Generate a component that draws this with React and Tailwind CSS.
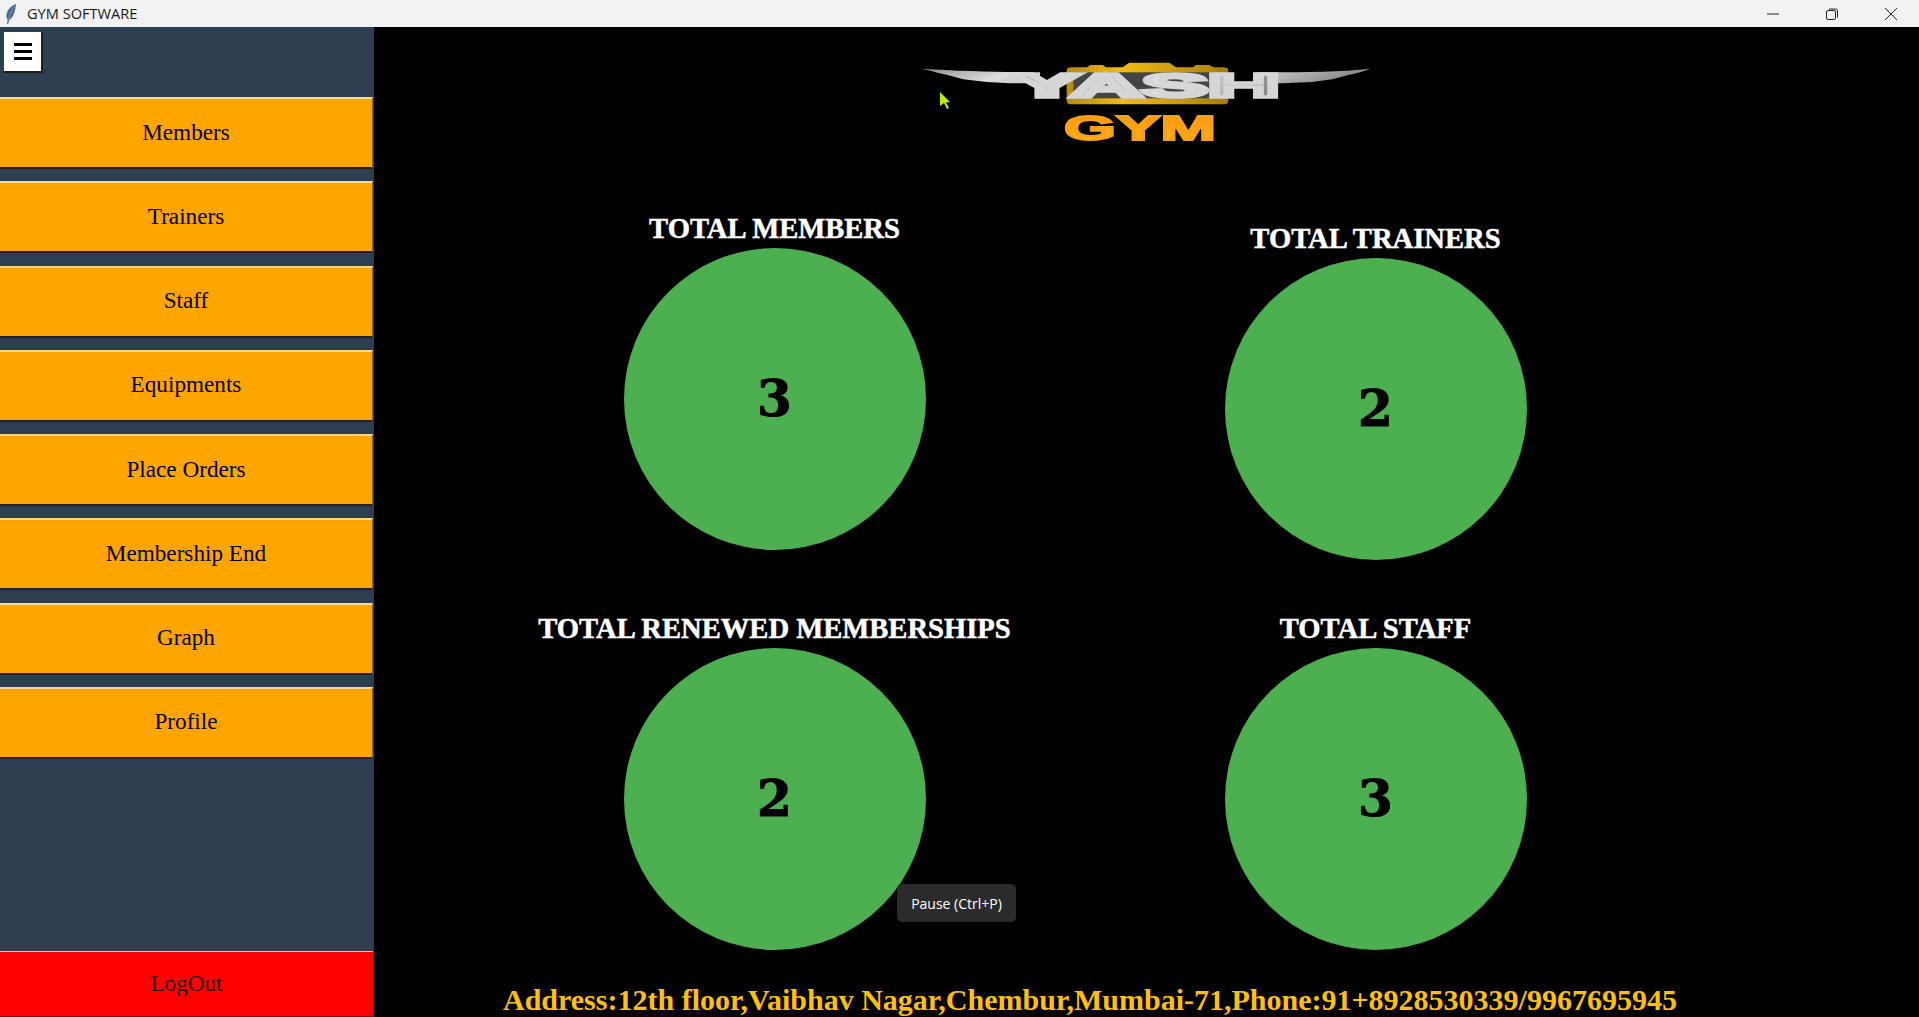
const menuItems = ["Members", "Trainers", "Staff", "Equipments", "Place Orders", "Membership End", "Graph", "Profile"]

const Feather = () => (
    <svg width="14" height="22" viewBox="0 0 14 22">
        <path d="M12 1C7 3 3 7 2.500 12c-.2 2 .2 3.500 1.200 4.500L3 21h1.200l1-4C9 15 11.500 8 12 1z" fill="#4a6a96" />
        <path d="M11 3C8 7 6 11 4.500 17" stroke="#9db4d2" strokeWidth="0.6" fill="none" />
    </svg>
)

const TitleBar = () => (
    <div className="flex h-[27px] items-center bg-[#f3f2f3]">
        <div className="ml-[4px] flex items-center">
            <Feather />
        </div>
        <span className="ml-[9px] font-['Open_Sans',sans-serif] text-[14.6px] text-[#1a1a1a]">GYM SOFTWARE</span>
        <div className="ml-auto flex items-center gap-[47px] pr-[22px]">
            <svg width="12" height="12" viewBox="0 0 12 12">
                <path d="M0 6h12" stroke="#222" strokeWidth="1" />
            </svg>
            <svg width="12" height="12" viewBox="0 0 12 12" fill="none" stroke="#222" strokeWidth="1">
                <rect x="0.500" y="2.500" width="9" height="9" rx="1.500" />
                <path d="M3 1h6.500A2 2 0 0 1 11.500 3v6.500" />
            </svg>
            <svg width="12" height="12" viewBox="0 0 12 12" stroke="#222" strokeWidth="1">
                <path d="M0 0l12 12M12 0L0 12" />
            </svg>
        </div>
    </div>
)

const Sidebar = () => (
    <div className="flex w-[374px] shrink-0 flex-col bg-[#2c3e50]">
        <button className="ml-[4px] mt-[5px] flex h-[41px] w-[39px] items-center justify-center border-r-2 border-b-2 border-[#1c1c1c] bg-white">
            <svg width="18" height="17" viewBox="0 0 18 17">
                <path d="M0 0h18v3H0zM0 7h18v3H0zM0 14h18v3H0z" fill="#000" />
            </svg>
        </button>
        <div className="mt-[24px] flex flex-col gap-[12.25px]">
            {menuItems.map((item) => (
                <button
                    key={item}
                    className="flex h-[72px] w-[373px] items-center justify-center border-t-2 border-r border-b-2 border-t-[#ffd88a] border-r-[#8a6000] border-b-[#22201c] bg-[#ffa500] pb-[2px] font-['Liberation_Serif',serif] text-[23.2px] text-black"
                >
                    {item}
                </button>
            ))}
        </div>
        <button className="mt-auto flex h-[66px] w-[373px] items-center justify-center border-t border-b border-t-[#ffb0b0] border-b-[#900000] bg-[#ff0000] pb-[2px] font-['Liberation_Serif',serif] text-[23.2px] text-[#1c0000]">
            LogOut
        </button>
    </div>
)

// logo viewBox is 3x its on-screen size
const Logo = () => (
    <svg width="500" height="120" viewBox="0 0 1500 360">
        <defs>
            <linearGradient id="silver" x1="0" y1="0" x2="1" y2="0.1">
                <stop offset="0" stopColor="#8c8c8c" />
                <stop offset="0.22" stopColor="#dcdcdc" />
                <stop offset="0.42" stopColor="#bdbdbd" />
                <stop offset="0.6" stopColor="#ececec" />
                <stop offset="0.8" stopColor="#c4c4c4" />
                <stop offset="1" stopColor="#8a8a8a" />
            </linearGradient>
            <linearGradient id="gold" x1="0" y1="0" x2="1" y2="0">
                <stop offset="0" stopColor="#b88a10" />
                <stop offset="0.35" stopColor="#f0bc14" />
                <stop offset="0.7" stopColor="#c8980f" />
                <stop offset="1" stopColor="#a87c0c" />
            </linearGradient>
            <linearGradient id="orange" x1="0" y1="0" x2="0" y2="1">
                <stop offset="0" stopColor="#f78f10" />
                <stop offset="1" stopColor="#ffb81c" />
            </linearGradient>
        </defs>
        <path d="M530 82h30l12-7h36l10 7h50l20-14h120l20 14h50l10-7h40l12 7h30q15 0 15 10v90q0 11-15 11H515q-15 0-15-11V92q0-10 15-10z" fill="url(#gold)" />
        <rect x="520" y="97" width="425" height="78" fill="#444444" />
        <path d="M65 86c120 8 260 10 355 11v33H330l-70-4-70-8-50-14-25-5-20-6zM1412 86c-100 11-220 11-345 11v33h80l90-4 60-8 45-12 30-7 20-6z" fill="url(#silver)" />
        <text x="342" y="170" textLength="796" lengthAdjust="spacingAndGlyphs" fontFamily="'Liberation Sans',sans-serif" fontWeight="700" fontSize="100" fill="url(#silver)" stroke="#d6d6d6" strokeWidth="11">YASH</text>
        <text x="492" y="299" textLength="456" lengthAdjust="spacingAndGlyphs" fontFamily="'Liberation Sans',sans-serif" fontWeight="700" fontSize="104" fill="url(#orange)" stroke="#f9a015" strokeWidth="6">GYM</text>
    </svg>
)

const StatCard = ({ label, value, className }) => (
    <div className={`flex flex-col items-center ${className}`}>
        <h3 className="pt-[2px] font-['Liberation_Serif',serif] text-[28.6px] leading-[34px] font-bold text-white [-webkit-text-stroke:0.5px_white]">{label}</h3>
        <div className="mt-[2px] flex h-[302px] w-[302px] items-center justify-center rounded-full bg-[#4caf50]">
            <span className="font-['DejaVu_Serif',serif] text-[50px] leading-none font-bold text-black [-webkit-text-stroke:1px_black]">{value}</span>
        </div>
    </div>
)

const App = () => {
    return (
        <div className="flex h-[1017px] w-full flex-col overflow-hidden bg-black">
            <TitleBar />
            <div className="flex min-h-0 flex-1">
                <Sidebar />
                <div className="relative flex flex-1 flex-col items-center">
                    <div className="ml-[7px] mt-[13px]">
                        <Logo />
                    </div>
                    <div className="ml-[100px] mt-[50px] grid w-[1202px] grid-cols-2 justify-items-center self-start">
                        <StatCard label="TOTAL MEMBERS" value="3" />
                        <StatCard label="TOTAL TRAINERS" value="2" className="mt-[10px]" />
                        <StatCard label="TOTAL RENEWED MEMBERSHIPS" value="2" className="mt-[50px]" />
                        <StatCard label="TOTAL STAFF" value="3" className="mt-[50px]" />
                    </div>
                    <p className="ml-[129px] mt-[33px] self-start font-['Liberation_Serif',serif] text-[30px] leading-[34px] font-bold whitespace-nowrap text-[#ffc107]">
                        Address:12th floor,Vaibhav Nagar,Chembur,Mumbai-71,Phone:91+8928530339/9967695945
                    </p>
                    {/* player tooltip and cursor lying over the recording */}
                    <div className="absolute top-[857px] left-[523px] flex h-[38px] w-[119px] items-center justify-center rounded-[5px] bg-[#2b2b2b] font-['Open_Sans',sans-serif] text-[14px] text-white">
                        Pause (Ctrl+P)
                    </div>
                    <svg className="absolute top-[65px] left-[566px]" width="11" height="17" viewBox="0 0 11 17">
                        <path d="M0 0l10 10-4 .5 3 5.500-2 1-3-6-4 3z" fill="#b8f000" />
                    </svg>
                </div>
            </div>
        </div>
    )
}

export default App
